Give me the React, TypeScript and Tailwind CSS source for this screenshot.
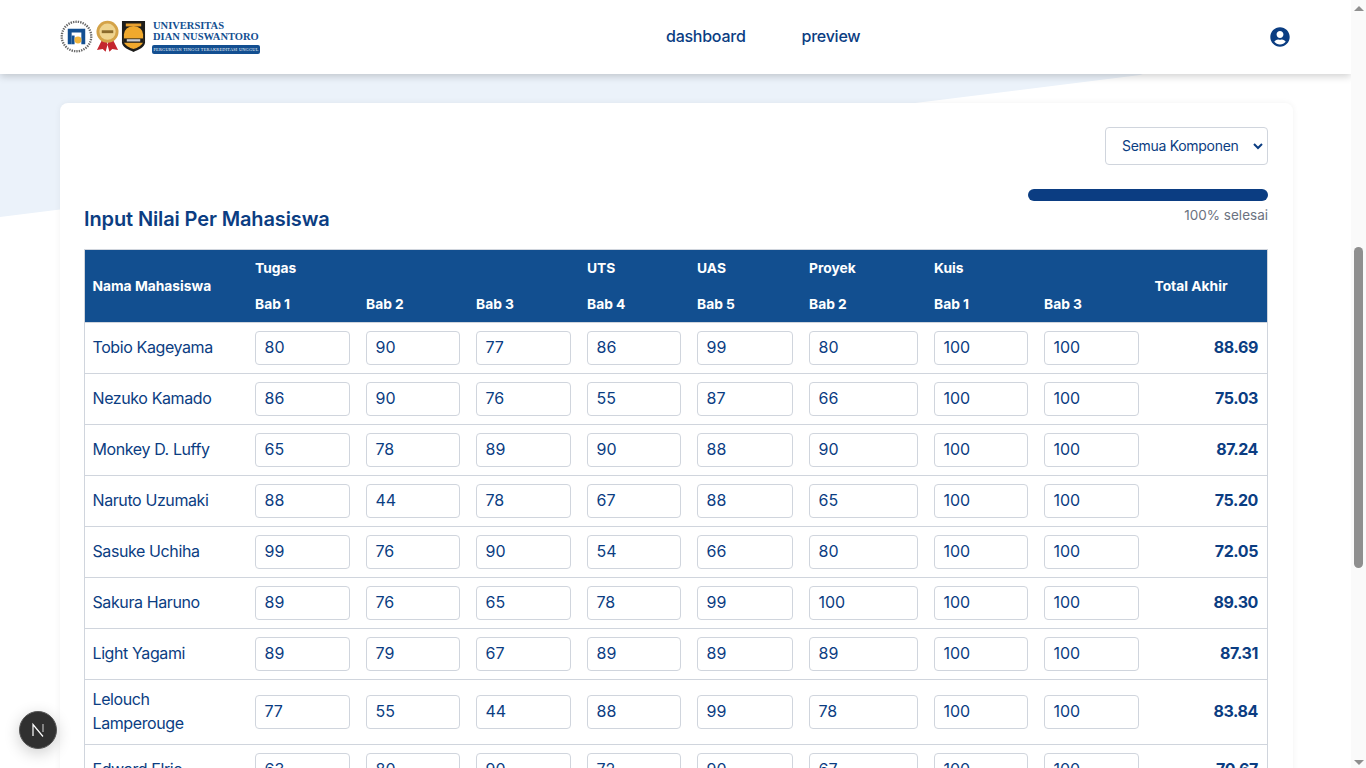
import { FaUserCircle } from "react-icons/fa";

const rows: [string, number[], string][] = [
  ["Tobio Kageyama", [80, 90, 77, 86, 99, 80, 100, 100], "88.69"],
  ["Nezuko Kamado", [86, 90, 76, 55, 87, 66, 100, 100], "75.03"],
  ["Monkey D. Luffy", [65, 78, 89, 90, 88, 90, 100, 100], "87.24"],
  ["Naruto Uzumaki", [88, 44, 78, 67, 88, 65, 100, 100], "75.20"],
  ["Sasuke Uchiha", [99, 76, 90, 54, 66, 80, 100, 100], "72.05"],
  ["Sakura Haruno", [89, 76, 65, 78, 99, 100, 100, 100], "89.30"],
  ["Light Yagami", [89, 79, 67, 89, 89, 89, 100, 100], "87.31"],
  ["Lelouch Lamperouge", [77, 55, 44, 88, 99, 78, 100, 100], "83.84"],
  ["Edward Elric", [63, 80, 90, 72, 90, 67, 100, 100], "70.67"],
];

const babs = ["Bab 1", "Bab 2", "Bab 3", "Bab 4", "Bab 5", "Bab 2", "Bab 1", "Bab 3"];

function Logo() {
  return (
    <div className="-mt-px flex items-center">
      <svg width="33" height="33" viewBox="0 0 34 34">
        <circle cx="17" cy="17" r="15.2" fill="#fff" stroke="#666" strokeWidth="2.4" strokeDasharray="1.4 1.1" />
        <circle cx="17" cy="17" r="11.5" fill="#fff" />
        <path d="M8 9h18v16h-4V13H12v12H8z" fill="#134f91" />
        <rect x="12" y="16" width="3" height="9" fill="#134f91" />
        <circle cx="18.5" cy="20.5" r="3.6" fill="#f0b43c" />
      </svg>
      <svg width="23" height="33" viewBox="0 0 24 34" className="ml-[3px]">
        <path d="M7 19 1 31l6-1 3 3 3-11zM17 19l6 12-6-1-3 3-3-11z" fill="#c4262e" />
        <circle cx="12" cy="12" r="11.5" fill="#d4a348" />
        <circle cx="12" cy="12" r="8.5" fill="#efd48f" />
        <rect x="6" y="10.5" width="12" height="3" fill="#8a6a2b" />
      </svg>
      <svg width="25" height="33" viewBox="0 0 26 34" className="ml-[2px]">
        <path d="M1 1h24v22c0 5-7 8-12 10C8 31 1 28 1 23z" fill="#1d1d1b" />
        <path d="M3 15a10 9 0 0 1 20 0v7c0 4-6 7-10 8-4-1-10-4-10-8z" fill="#f0a92d" />
        <rect x="3" y="19" width="20" height="4.5" fill="#1d1d1b" />
        <rect x="6" y="19.8" width="14" height="2.4" fill="#cfcfcf" />
        <rect x="5" y="3.5" width="16" height="3" fill="#e8a030" />
      </svg>
      <div className="ml-[6px] flex w-[108px] flex-col font-['Liberation_Serif',serif] text-[#134f91]">
        <span className="pl-px text-[10.5px] leading-[11px] font-bold whitespace-nowrap">UNIVERSITAS</span>
        <span className="pl-px text-[10.5px] leading-[11px] font-bold whitespace-nowrap">DIAN NUSWANTORO</span>
        <span className="mt-[3px] flex h-[9px] items-center justify-center rounded-[2px] bg-[#134f91] text-[4.3px] leading-[9px] tracking-[0.25px] whitespace-nowrap text-white">
          PERGURUAN TINGGI TERAKREDITASI UNGGUL
        </span>
      </div>
    </div>
  );
}

export default function App() {
  return (
    <div className="flex h-screen overflow-hidden bg-white font-['Inter',sans-serif] text-[#0b3d82]">
      <div className="relative min-w-0 flex-1 overflow-hidden">
        <div className="absolute inset-x-0 top-0 h-[217px] bg-[#ebf2fa] [clip-path:polygon(0_0,100%_0,1140px_75px,0_217px)]" />
        <header className="relative z-10 flex h-[74px] items-center justify-between bg-white pr-[61px] pl-[60px] shadow-[0_2px_8px_rgba(0,0,0,0.2)]">
          <Logo />
          <nav className="absolute top-0 left-[666px] flex h-[72px] items-center gap-14 text-base font-medium tracking-[-0.25px]">
            <span>dashboard</span>
            <span>preview</span>
          </nav>
          <FaUserCircle className="text-[20px] text-[#0b3d82]" />
        </header>

        <main className="relative mt-[29px] ml-[60px] w-[1233px] rounded-t-lg bg-white py-6 pr-[25px] pl-6 shadow-[0_0_6px_rgba(0,0,0,0.06)]">
          <div className="flex items-end justify-between">
            <h2 className="text-xl leading-7 font-semibold tracking-[-0.12px]">Input Nilai Per Mahasiswa</h2>
            <div className="flex w-[240px] flex-col items-end pb-2">
              <div className="flex h-[38px] w-[163px] items-center justify-between rounded border border-[#d0d5dd] pr-[4px] pl-4 text-sm tracking-[-0.3px]">
                <span>Semua Komponen</span>
                <svg width="10" height="10" viewBox="0 0 10 10" fill="none" stroke="#0b3d82" strokeWidth="2">
                  <path d="M1 3 5 7l4-4" />
                </svg>
              </div>
              <div className="mt-6 h-3 w-full rounded-full bg-[#0b3d82]" />
              <span className="mt-1 text-[13.5px] leading-5 text-[#6b7280]">100% selesai</span>
            </div>
          </div>

          <table className="mt-4 w-[1183px] table-fixed border-collapse border border-[#d0d5dd] text-left">
            <colgroup>
              <col className="w-[162px]" />
              <col className="w-[111px]" />
              <col className="w-[110px]" />
              <col className="w-[111px]" />
              <col className="w-[110px]" />
              <col className="w-[112px]" />
              <col className="w-[125px]" />
              <col className="w-[110px]" />
              <col className="w-[111px]" />
              <col className="w-[121px]" />
            </colgroup>
            <thead className="bg-[#124f90] text-[13.8px] font-bold text-white">
              <tr className="h-9">
                <th rowSpan={2} className="pr-2 pl-[7.5px] font-bold">Nama Mahasiswa</th>
                <th colSpan={3} className="pt-[2px] pr-2 pl-[8.5px] font-bold">Tugas</th>
                <th className="pt-[2px] pr-2 pl-[8.5px] font-bold">UTS</th>
                <th className="pt-[2px] pr-2 pl-[8.5px] font-bold">UAS</th>
                <th className="pt-[2px] pr-2 pl-[8.5px] font-bold">Proyek</th>
                <th colSpan={2} className="pt-[2px] pr-2 pl-[8.5px] font-bold">Kuis</th>
                <th rowSpan={2} className="px-2 font-bold">Total Akhir</th>
              </tr>
              <tr className="h-[37px]">
                {babs.map((b, i) => (
                  <th key={i} className="pt-[2px] pr-2 pl-[8.5px] font-bold">{b}</th>
                ))}
              </tr>
            </thead>
            <tbody>
              {rows.map(([name, vals, total]) => (
                <tr key={name} className="border-t border-[#d0d5dd]">
                  <td className="pt-[7px] pr-2 pb-[9px] pl-[7.5px] text-base leading-6 tracking-[-0.4px]">{name}</td>
                  {vals.map((v, i) => (
                    <td key={i} className="px-2 py-2">
                      <div className="flex h-[34px] w-full items-center rounded border border-[#d0d5dd] pb-[3px] pl-[9px] text-base">{v}</div>
                    </td>
                  ))}
                  <td className="pt-[7px] pr-[9px] pb-[9px] text-right text-base font-bold tracking-[-0.4px]">{total}</td>
                </tr>
              ))}
            </tbody>
          </table>
        </main>

        <div className="absolute top-[711px] left-[19px] z-20 flex h-[38px] w-[38px] items-center justify-center rounded-full border border-[#555] bg-[#303030] shadow-[0_4px_16px_rgba(0,0,0,0.2)]">
          <svg width="16" height="16" viewBox="0 0 16 16" fill="none" stroke="#fff" strokeWidth="1.2">
            <path d="M3 14V2.5l10 12" />
            <path d="M13 2v8" stroke="#bbb" />
          </svg>
        </div>
      </div>

      <div className="flex w-[15px] shrink-0 flex-col items-center bg-[#fafafa]">
        <div className="mt-[6px] h-0 w-0 border-x-[5px] border-b-[5px] border-x-transparent border-b-[#8f8f8f]" />
        <div className="mt-[236px] h-[321px] w-[9px] rounded-full bg-[#8f8f8f]" />
        <div className="mt-auto mb-[3px] h-0 w-0 border-x-[5px] border-t-[5px] border-x-transparent border-t-[#8f8f8f]" />
      </div>
    </div>
  );
}
